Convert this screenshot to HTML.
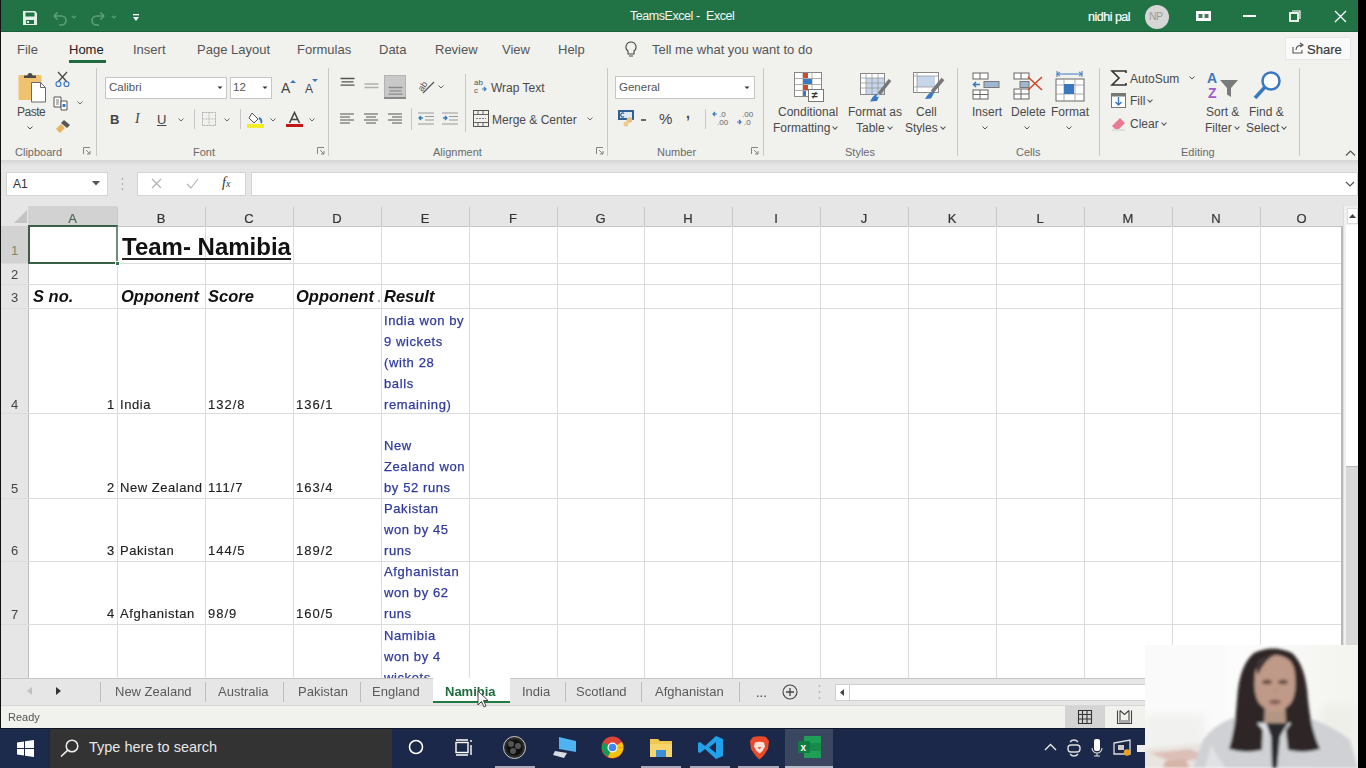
<!DOCTYPE html>
<html><head><meta charset="utf-8">
<style>
*{margin:0;padding:0;box-sizing:border-box}
html,body{width:1366px;height:768px;overflow:hidden;background:#000;font-family:"Liberation Sans",sans-serif}
.a{position:absolute}
.t{position:absolute;white-space:nowrap;line-height:1}
svg{position:absolute;overflow:visible}
#title{left:1px;top:0;width:1357px;height:32px;background:#217346}
#tabs{left:1px;top:32px;width:1357px;height:34px;background:#f1f1ee}
#ribbon{left:1px;top:66px;width:1357px;height:94px;background:#f1f1ee}
#shadow{left:1px;top:160px;width:1357px;height:10px;background:linear-gradient(#d6d6d6,#e6e6e6 60%)}
#fbar{left:1px;top:170px;width:1357px;height:36px;background:#e6e6e6}
#colhdr{left:1px;top:206px;width:1357px;height:20px;background:#e6e6e6}
#grid{left:1px;top:226px;width:1342px;height:452px;background:#fff}
#sheettabs{left:1px;top:678px;width:1357px;height:28px;background:#e6e6e6}
#status{left:1px;top:706px;width:1357px;height:22px;background:#f1f1ee}
#taskbar{left:0;top:728px;width:1358px;height:40px;background:#1c2849}
.tab{font-size:13px;color:#555;top:43px}
.lbl{font-size:11px;color:#6a6a6a;top:147px}
.rt{font-size:12px;color:#4a4a4a}
.sep{position:absolute;width:1px;background:#c8c8c8}
.ch{display:inline-block;width:4px;height:4px;border-right:1.2px solid #555;border-bottom:1.2px solid #555;transform:rotate(45deg);margin-left:3px;position:relative;top:-3px}
#wrap{position:absolute;left:0;top:0;width:1366px;height:768px;filter:blur(0.35px)}
</style></head><body><div id="wrap">
<div class="a" style="left:0;top:0;width:1px;height:728px;background:#111"></div>
<div id="title" class="a"></div>
<div id="tabs" class="a"></div>
<div id="ribbon" class="a"></div>
<div id="shadow" class="a"></div>
<div id="fbar" class="a"></div>
<div id="colhdr" class="a"></div>
<div id="grid" class="a"></div>
<div id="sheettabs" class="a"></div>
<div id="status" class="a"></div>
<div id="taskbar" class="a"></div>

<!-- TITLEBAR -->
<svg style="left:22px;top:10px" width="16" height="16" viewBox="0 0 16 16"><path d="M1 1h12l2 2v12H1z" fill="#e4efe8"/><rect x="3.5" y="2.5" width="9" height="4" fill="#217346"/><rect x="4" y="10" width="8" height="4" fill="#217346"/><rect x="5" y="11" width="2" height="2" fill="#e4efe8"/></svg>
<svg style="left:51px;top:10px" width="30" height="16" viewBox="0 0 30 16"><path d="M3 6h7.5a4.5 4.5 0 0 1 0 9H8M3 6l3.5-3.5M3 6l3.5 3.5" fill="none" stroke="#5f9e7a" stroke-width="1.6"/><path d="M21 6l2 2 2-2" fill="none" stroke="#5f9e7a" stroke-width="1.1"/></svg>
<svg style="left:89px;top:10px" width="30" height="16" viewBox="0 0 30 16"><path d="M15 6H7.5a4.5 4.5 0 0 0 0 9H10M15 6l-3.5-3.5M15 6l-3.5 3.5" fill="none" stroke="#5f9e7a" stroke-width="1.6"/><path d="M23 6l2 2 2-2" fill="none" stroke="#5f9e7a" stroke-width="1.1"/></svg>
<svg style="left:132px;top:13px" width="8" height="10" viewBox="0 0 8 10"><rect x="1" y="1" width="6" height="1.3" fill="#fff"/><path d="M1 4h6L4 8z" fill="#fff"/></svg>
<div class="t" style="left:630px;top:10px;font-size:12.5px;color:#f4f8f5;letter-spacing:-0.45px">TeamsExcel</div><div class="t" style="left:696px;top:10px;font-size:12.5px;color:#f4f8f5">-</div><div class="t" style="left:706px;top:10px;font-size:12.5px;color:#f4f8f5;letter-spacing:-0.45px">Excel</div><div class="a" style="left:1px;top:31px;width:1357px;height:1px;background:#1b5e38"></div>
<div class="t" style="left:1088px;top:11px;font-size:12.5px;color:#fff;letter-spacing:-0.5px;-webkit-text-stroke:0.2px #fff">nidhi pal</div>
<div class="a" style="left:1145px;top:5px;width:24px;height:24px;border-radius:50%;background:#d6d6d6"></div>
<div class="t" style="left:1149px;top:11px;font-size:10.5px;color:#9a9a9a;letter-spacing:-0.5px">NP</div>
<svg style="left:1196px;top:11px" width="15" height="10" viewBox="0 0 15 10"><rect x="0" y="0" width="15" height="10" fill="#fff"/><rect x="2.5" y="3" width="4" height="4" fill="#4a7a5c"/><rect x="8.5" y="3" width="4" height="4" fill="#4a7a5c"/></svg>
<div class="a" style="left:1243px;top:15px;width:13px;height:1.5px;background:#fff"></div>
<svg style="left:1289px;top:10px" width="12" height="12" viewBox="0 0 12 12"><rect x="1" y="3" width="8" height="8" fill="none" stroke="#fff" stroke-width="1.8"/><path d="M3 1h8v8" fill="none" stroke="#fff" stroke-width="1.2"/></svg>
<svg style="left:1334px;top:10px" width="13" height="13" viewBox="0 0 13 13"><path d="M1 1l11 11M12 1L1 12" stroke="#fff" stroke-width="1.3"/></svg>

<!-- TABS -->
<div class="t tab" style="left:17px">File</div>
<div class="t tab" style="left:69px;color:#222">Home</div>
<div class="a" style="left:69px;top:60px;width:37px;height:3px;background:#1e6b3e"></div>
<div class="t tab" style="left:133px">Insert</div>
<div class="t tab" style="left:197px">Page Layout</div>
<div class="t tab" style="left:297px">Formulas</div>
<div class="t tab" style="left:379px">Data</div>
<div class="t tab" style="left:435px">Review</div>
<div class="t tab" style="left:502px">View</div>
<div class="t tab" style="left:558px">Help</div>
<svg style="left:625px;top:41px" width="12" height="16" viewBox="0 0 12 16"><path d="M6 1a5 5 0 0 0-3 9v3h6v-3a5 5 0 0 0-3-9z" fill="none" stroke="#444" stroke-width="1.1"/><path d="M4 15h4" stroke="#444"/></svg>
<div class="t tab" style="left:652px">Tell me what you want to do</div>
<div class="a" style="left:1285px;top:37px;width:66px;height:23px;background:#fafafa;border:1px solid #e6e6e6"></div>
<svg style="left:1292px;top:42px" width="12" height="12" viewBox="0 0 12 12"><path d="M1 5v6h9V8M4 8c0-4 3-5 7-5M8 1l3 2-3 2" fill="none" stroke="#555" stroke-width="1.1"/></svg>
<div class="t" style="left:1307px;top:43px;font-size:13px;color:#3a3a3a;-webkit-text-stroke:0.2px #3a3a3a">Share</div>

<!-- RIBBON: Clipboard -->
<svg style="left:17px;top:71px" width="30" height="32" viewBox="0 0 30 32"><rect x="1.5" y="4" width="23" height="25" rx="1" fill="#f0c26e"/><path d="M7 7h12V4.5h-3.5a2.5 2.5 0 0 0-5 0H7z" fill="#4a4a4a"/><path d="M14.5 11.5h9l5 5v14.5h-14z" fill="#fff" stroke="#6a6a6a" stroke-width="1"/><path d="M23.5 11.5v5h5" fill="none" stroke="#6a6a6a" stroke-width="1"/></svg>
<div class="t rt" style="left:17px;top:106px;letter-spacing:-0.5px">Paste</div>
<svg style="left:27px;top:126px" width="6" height="4" viewBox="0 0 6 4"><path d="M0.5 0.5l2.5 2.5 2.5-2.5" fill="none" stroke="#555" stroke-width="1"/></svg>
<svg style="left:55px;top:71px" width="15" height="16" viewBox="0 0 15 16"><path d="M3 1l9 10M12 1L3 11" stroke="#444" stroke-width="1.2"/><circle cx="3.5" cy="13" r="2.5" fill="none" stroke="#3a78c0" stroke-width="1.2"/><circle cx="11.5" cy="13" r="2.5" fill="none" stroke="#3a78c0" stroke-width="1.2"/></svg>
<svg style="left:53px;top:96px" width="17" height="15" viewBox="0 0 17 15"><path d="M1 1h7v10H1z" fill="#fff" stroke="#555"/><path d="M3 4h3M3 6h3M3 8h3" stroke="#555" stroke-width="0.8"/><path d="M8 5h6v9H8z" fill="#fff" stroke="#555"/><rect x="9.5" y="8" width="3" height="3" fill="#3a78c0"/></svg>
<svg style="left:77px;top:101px" width="6" height="4" viewBox="0 0 6 4"><path d="M0.5 0.5l2.5 2.5 2.5-2.5" fill="none" stroke="#666" stroke-width="1"/></svg>
<svg style="left:55px;top:119px" width="16" height="15" viewBox="0 0 16 15"><path d="M9 1l6 5-3 3-6-5z" fill="#555"/><path d="M6 5l4 4-5 5-4-4z" fill="#e8b563"/></svg>
<div class="t lbl" style="left:15px">Clipboard</div>
<svg style="left:83px;top:147px" width="8" height="8" viewBox="0 0 8 8"><path d="M0.5 7V0.5H7M3 3l4 4M7 4v3H4" fill="none" stroke="#777" stroke-width="0.9"/></svg>
<div class="sep" style="left:96px;top:68px;height:88px"></div>

<!-- Font -->
<div class="a" style="left:105px;top:77px;width:122px;height:22px;background:#fff;border:1px solid #c6c6c6"></div>
<div class="t" style="left:109px;top:82px;font-size:11.5px;color:#555">Calibri</div>
<svg style="left:217px;top:86px" width="6" height="4" viewBox="0 0 6 4"><path d="M0.5 0.5h5L3 3z" fill="#333"/></svg>
<div class="a" style="left:230px;top:77px;width:42px;height:22px;background:#fff;border:1px solid #c6c6c6"></div>
<div class="t" style="left:233px;top:82px;font-size:11.5px;color:#555">12</div>
<svg style="left:262px;top:86px" width="6" height="4" viewBox="0 0 6 4"><path d="M0.5 0.5h5L3 3z" fill="#333"/></svg>
<div class="t" style="left:281px;top:81px;font-size:14px;color:#444">A</div>
<svg style="left:290px;top:79px" width="6" height="4" viewBox="0 0 6 4"><path d="M0 4l3-3 3 3z" fill="#3a78c0"/></svg>
<div class="t" style="left:305px;top:83px;font-size:12px;color:#444">A</div>
<svg style="left:312px;top:79px" width="6" height="4" viewBox="0 0 6 4"><path d="M0 0l3 3 3-3z" fill="#3a78c0"/></svg>
<div class="t" style="left:110px;top:113px;font-size:13px;font-weight:bold;color:#444">B</div>
<div class="t" style="left:135px;top:112px;font-size:14px;font-style:italic;color:#444;font-family:'Liberation Serif',serif">I</div>
<div class="t" style="left:157px;top:113px;font-size:13px;text-decoration:underline;color:#444">U</div>
<svg style="left:178px;top:118px" width="6" height="4" viewBox="0 0 6 4"><path d="M0.5 0.5l2.5 2.5 2.5-2.5" fill="none" stroke="#666" stroke-width="1"/></svg>
<div class="sep" style="left:194px;top:109px;height:20px"></div>
<svg style="left:202px;top:112px" width="14" height="14" viewBox="0 0 14 14"><rect x="0.5" y="0.5" width="13" height="13" fill="none" stroke="#aaa" stroke-dasharray="2 1"/><path d="M7 0.5v13M0.5 7h13" stroke="#bbb" stroke-dasharray="2 1"/></svg>
<svg style="left:224px;top:118px" width="6" height="4" viewBox="0 0 6 4"><path d="M0.5 0.5l2.5 2.5 2.5-2.5" fill="none" stroke="#666" stroke-width="1"/></svg>
<div class="sep" style="left:240px;top:109px;height:20px"></div>
<svg style="left:247px;top:110px" width="18" height="18" viewBox="0 0 18 18"><path d="M5 3l6 6-4 4-5-5z" fill="#fff" stroke="#555"/><path d="M12 8c2 1 3 3 2 5" fill="none" stroke="#3a78c0" stroke-width="2"/><rect x="0" y="14" width="17" height="4" fill="#f4ee2a"/></svg>
<svg style="left:270px;top:118px" width="6" height="4" viewBox="0 0 6 4"><path d="M0.5 0.5l2.5 2.5 2.5-2.5" fill="none" stroke="#666" stroke-width="1"/></svg>
<svg style="left:286px;top:111px" width="17" height="17" viewBox="0 0 17 17"><path d="M3.5 12L8.5 1.5l5 10.5M5.5 8.5h6" fill="none" stroke="#444" stroke-width="1.6"/><rect x="0" y="13" width="17" height="3" fill="#c01818"/></svg>
<svg style="left:309px;top:118px" width="6" height="4" viewBox="0 0 6 4"><path d="M0.5 0.5l2.5 2.5 2.5-2.5" fill="none" stroke="#666" stroke-width="1"/></svg>
<div class="t lbl" style="left:193px">Font</div>
<svg style="left:317px;top:147px" width="8" height="8" viewBox="0 0 8 8"><path d="M0.5 7V0.5H7M3 3l4 4M7 4v3H4" fill="none" stroke="#777" stroke-width="0.9"/></svg>
<div class="sep" style="left:328px;top:68px;height:88px"></div>

<!-- Alignment -->
<svg style="left:340px;top:77px" width="15" height="10" viewBox="0 0 15 10"><path d="M0.5 1.5h14M1.5 4.8h12M0.5 8.1h14" stroke="#555" stroke-width="1.3"/></svg>
<svg style="left:364px;top:83px" width="15" height="7" viewBox="0 0 15 7"><path d="M0.5 1h14M0.5 4.5h14" stroke="#b0b0b0" stroke-width="1.3"/></svg>
<div class="a" style="left:384px;top:75px;width:22px;height:24px;background:#c9c9c9;border:1px solid #b4b4b4"></div>
<svg style="left:388px;top:86px" width="15" height="10" viewBox="0 0 15 10"><path d="M0.5 1.5h14M1.5 4.8h12M0.5 8.1h14" stroke="#8a8a8a" stroke-width="1.3"/></svg><div class="a" style="left:384px;top:97px;width:22px;height:2px;background:#8a8a8a"></div>
<svg style="left:418px;top:78px" width="17" height="16" viewBox="0 0 17 16"><text x="0" y="10" font-size="9" fill="#555" transform="rotate(-55 6 8)" font-family="Liberation Sans">ab</text><path d="M5 15l11-11" stroke="#555" stroke-width="1.2"/></svg>
<svg style="left:438px;top:85px" width="6" height="4" viewBox="0 0 6 4"><path d="M0.5 0.5l2.5 2.5 2.5-2.5" fill="none" stroke="#666" stroke-width="1"/></svg>
<div class="sep" style="left:465px;top:74px;height:58px"></div>
<svg style="left:474px;top:78px" width="14" height="16" viewBox="0 0 14 16"><text x="0" y="7" font-size="8" fill="#555" font-family="Liberation Sans">ab</text><text x="0" y="15" font-size="8" fill="#555" font-family="Liberation Sans">c</text><path d="M8 11h4M10 9l2 2-2 2" fill="none" stroke="#3a78c0" stroke-width="1.1"/></svg>
<div class="t rt" style="left:491px;top:82px">Wrap Text</div>
<svg style="left:340px;top:113px" width="14" height="12" viewBox="0 0 14 12"><path d="M0 1h14M0 4h10M0 7h14M0 10h10" stroke="#555" stroke-width="1.1"/></svg>
<svg style="left:364px;top:113px" width="14" height="12" viewBox="0 0 14 12"><path d="M0 1h14M2 4h10M0 7h14M2 10h10" stroke="#555" stroke-width="1.1"/></svg>
<svg style="left:388px;top:113px" width="14" height="12" viewBox="0 0 14 12"><path d="M0 1h14M4 4h10M0 7h14M4 10h10" stroke="#555" stroke-width="1.1"/></svg>
<div class="sep" style="left:411px;top:108px;height:22px"></div>
<svg style="left:418px;top:112px" width="16" height="13" viewBox="0 0 16 13"><path d="M0 1h16M7 4.5h9M7 8h9M0 12h16" stroke="#999" stroke-width="1.1"/><path d="M5 6H1M3 4L1 6l2 2" fill="none" stroke="#3a78c0" stroke-width="1.3"/></svg>
<svg style="left:442px;top:112px" width="16" height="13" viewBox="0 0 16 13"><path d="M0 1h16M7 4.5h9M7 8h9M0 12h16" stroke="#999" stroke-width="1.1"/><path d="M1 6h4M3 4l2 2-2 2" fill="none" stroke="#3a78c0" stroke-width="1.3"/></svg>
<svg style="left:473px;top:110px" width="16" height="17" viewBox="0 0 16 17"><rect x="0.5" y="0.5" width="15" height="16" fill="none" stroke="#555"/><path d="M0.5 4.5h15M0.5 12.5h15M5 0.5v4M10 0.5v4M5 12.5v4M10 12.5v4" stroke="#555" stroke-width="0.9"/><path d="M3 8.5h10" stroke="#777" stroke-dasharray="2 1"/></svg>
<div class="t rt" style="left:492px;top:114px">Merge &amp; Center</div>
<svg style="left:587px;top:117px" width="6" height="4" viewBox="0 0 6 4"><path d="M0.5 0.5l2.5 2.5 2.5-2.5" fill="none" stroke="#666" stroke-width="1"/></svg>
<div class="t lbl" style="left:433px">Alignment</div>
<svg style="left:596px;top:147px" width="8" height="8" viewBox="0 0 8 8"><path d="M0.5 7V0.5H7M3 3l4 4M7 4v3H4" fill="none" stroke="#777" stroke-width="0.9"/></svg>
<div class="sep" style="left:607px;top:68px;height:88px"></div>

<!-- Number -->
<div class="a" style="left:615px;top:76px;width:140px;height:23px;background:#fff;border:1px solid #c6c6c6"></div>
<div class="t" style="left:619px;top:82px;font-size:11.5px;color:#555">General</div>
<svg style="left:744px;top:86px" width="6" height="4" viewBox="0 0 6 4"><path d="M0.5 0.5h5L3 3z" fill="#333"/></svg>
<svg style="left:618px;top:110px" width="17" height="17" viewBox="0 0 17 17"><rect x="0" y="0" width="16" height="10" fill="#2f5f94"/><rect x="2" y="2" width="12" height="6" fill="#dfe8f3"/><path d="M6 3.5a2 2 0 1 0 0 3" fill="none" stroke="#2f5f94" stroke-width="1.2"/><circle cx="11.5" cy="10" r="2.8" fill="#e8c080"/><circle cx="8" cy="14" r="2.5" fill="#f0c888"/></svg>
<div class="a" style="left:641px;top:119px;width:5px;height:1.5px;background:#666"></div>
<div class="t" style="left:659px;top:111px;font-size:15px;color:#444">%</div>
<div class="t" style="left:686px;top:106px;font-size:14px;color:#444;font-weight:bold">,</div>
<div class="sep" style="left:705px;top:109px;height:20px"></div>
<svg style="left:712px;top:110px" width="17" height="16" viewBox="0 0 17 16"><path d="M5 4H1M3 2L1 4l2 2" fill="none" stroke="#3a78c0" stroke-width="1.2"/><text x="7" y="7" font-size="8" fill="#666" font-family="Liberation Sans">.0</text><text x="5" y="15" font-size="8" fill="#666" font-family="Liberation Sans">.00</text></svg>
<svg style="left:736px;top:110px" width="17" height="16" viewBox="0 0 17 16"><text x="6" y="7" font-size="8" fill="#666" font-family="Liberation Sans">.00</text><path d="M1 12h4M3 10l2 2-2 2" fill="none" stroke="#3a78c0" stroke-width="1.2"/><text x="8" y="15" font-size="8" fill="#666" font-family="Liberation Sans">.0</text></svg>
<div class="t lbl" style="left:657px">Number</div>
<svg style="left:751px;top:147px" width="8" height="8" viewBox="0 0 8 8"><path d="M0.5 7V0.5H7M3 3l4 4M7 4v3H4" fill="none" stroke="#777" stroke-width="0.9"/></svg>
<div class="sep" style="left:763px;top:68px;height:88px"></div>

<!-- Styles -->
<svg style="left:794px;top:72px" width="31" height="31" viewBox="0 0 31 31"><rect x="0.5" y="0.5" width="27" height="24" fill="#fff" stroke="#888"/><path d="M0.5 6.5h27M0.5 12.5h27M0.5 18.5h27M9 0.5v24M18 0.5v24" stroke="#999" stroke-width="0.8"/><rect x="9" y="1" width="5" height="5" fill="#d24726"/><rect x="9" y="7" width="9" height="5" fill="#3a78c0"/><rect x="9" y="13" width="5" height="5" fill="#d24726"/><rect x="9" y="19" width="3" height="5" fill="#3a78c0"/><rect x="14.5" y="17.5" width="15" height="12" fill="#fff" stroke="#777"/><text x="17.5" y="27" font-size="11" font-weight="bold" fill="#333" font-family="Liberation Sans">≠</text></svg>
<div class="t rt" style="left:778px;top:106px">Conditional</div>
<div class="t rt" style="left:773px;top:122px">Formatting<span class="ch"></span></div>
<svg style="left:860px;top:73px" width="32" height="30" viewBox="0 0 32 30"><rect x="0.5" y="0.5" width="24" height="21" fill="#fff" stroke="#888"/><rect x="6" y="5" width="18" height="16" fill="#c5d5ea"/><path d="M0.5 5h24M0.5 10h24M0.5 15h24M6 0.5v21M12 0.5v21M18 0.5v21" stroke="#999" stroke-width="0.8"/><path d="M30 7L19 21" stroke="#777" stroke-width="3.5"/><path d="M10 28.5c3-6 6-9 10-7l-3 6.5z" fill="#3a78c0"/><path d="M16 23l3-2 1 1.5-2 2z" fill="#dfe9f5"/></svg>
<div class="t rt" style="left:848px;top:106px">Format as</div>
<div class="t rt" style="left:856px;top:122px">Table<span class="ch"></span></div>
<svg style="left:913px;top:72px" width="30" height="28" viewBox="0 0 30 28"><rect x="0.5" y="0.5" width="25" height="20" fill="#fff" stroke="#888"/><rect x="4" y="4" width="18" height="11" fill="#c5d5ea"/><path d="M0.5 4h25M0.5 15h25M4 0.5v20" stroke="#999" stroke-width="0.8"/><path d="M30 7L19 20" stroke="#777" stroke-width="3.5"/><path d="M12 27c3-5 6-8 9-6l-3 5.5z" fill="#3a78c0"/></svg>
<div class="t rt" style="left:916px;top:106px">Cell</div>
<div class="t rt" style="left:905px;top:122px">Styles<span class="ch"></span></div>
<div class="t lbl" style="left:845px">Styles</div>
<div class="sep" style="left:957px;top:68px;height:88px"></div>

<!-- Cells -->
<svg style="left:972px;top:72px" width="28" height="28" viewBox="0 0 28 28"><rect x="1" y="1" width="15" height="6" fill="#fff" stroke="#666"/><path d="M8 1v6" stroke="#666"/><rect x="12" y="9.5" width="15" height="6" fill="#9fb5d0" stroke="#777"/><path d="M1 12.5h7M4 10l-2.5 2.5L4 15" fill="none" stroke="#3a78c0" stroke-width="1.6"/><rect x="1" y="18" width="15" height="9" fill="#fff" stroke="#666"/><path d="M8 18v9M1 22.5h15" stroke="#666"/></svg>
<div class="t rt" style="left:972px;top:106px">Insert</div>
<svg style="left:982px;top:126px" width="6" height="4" viewBox="0 0 6 4"><path d="M0.5 0.5l2.5 2.5 2.5-2.5" fill="none" stroke="#555" stroke-width="1"/></svg>
<svg style="left:1013px;top:72px" width="31" height="28" viewBox="0 0 31 28"><rect x="1" y="1" width="15" height="6" fill="#fff" stroke="#666"/><path d="M8 1v6" stroke="#666"/><rect x="7" y="9.5" width="9" height="6" fill="#9fb5d0" stroke="#777"/><rect x="1" y="17" width="15" height="10" fill="#fff" stroke="#666"/><path d="M8 17v10M1 22h15" stroke="#666"/><path d="M15 5l14 13M29 5L15 18" stroke="#d24726" stroke-width="1.6"/></svg>
<div class="t rt" style="left:1011px;top:106px">Delete</div>
<svg style="left:1024px;top:126px" width="6" height="4" viewBox="0 0 6 4"><path d="M0.5 0.5l2.5 2.5 2.5-2.5" fill="none" stroke="#555" stroke-width="1"/></svg>
<svg style="left:1055px;top:70px" width="30" height="33" viewBox="0 0 30 33"><path d="M2 4h25M2 1v6M27 1v6M5 2L2 4l3 2M24 2l3 2-3 2" fill="none" stroke="#3a78c0" stroke-width="1"/><rect x="1" y="9" width="28" height="22" fill="#fff" stroke="#666"/><path d="M1 15h28M1 24h28M9 9v22M20 9v22" stroke="#999" stroke-width="0.8"/><rect x="9" y="14" width="10" height="10" fill="#3a78c0"/></svg>
<div class="t rt" style="left:1051px;top:106px">Format</div>
<svg style="left:1066px;top:126px" width="6" height="4" viewBox="0 0 6 4"><path d="M0.5 0.5l2.5 2.5 2.5-2.5" fill="none" stroke="#555" stroke-width="1"/></svg>
<div class="t lbl" style="left:1016px">Cells</div>
<div class="sep" style="left:1099px;top:68px;height:88px"></div>

<!-- Editing -->
<svg style="left:1111px;top:70px" width="16" height="16" viewBox="0 0 16 16"><path d="M15 3V1H1l7 7-7 7h14v-2" fill="none" stroke="#333" stroke-width="1.6"/></svg>
<div class="t rt" style="left:1130px;top:73px">AutoSum</div>
<svg style="left:1189px;top:76px" width="6" height="4" viewBox="0 0 6 4"><path d="M0.5 0.5l2.5 2.5 2.5-2.5" fill="none" stroke="#555" stroke-width="1"/></svg>
<svg style="left:1111px;top:93px" width="15" height="15" viewBox="0 0 15 15"><rect x="0.5" y="0.5" width="14" height="14" fill="#fff" stroke="#777"/><rect x="0.5" y="0.5" width="14" height="3" fill="#777"/><path d="M7.5 4v8M4.5 9l3 3 3-3" fill="none" stroke="#3a78c0" stroke-width="1.4"/></svg>
<div class="t rt" style="left:1130px;top:95px">Fill<span class="ch"></span></div>
<svg style="left:1111px;top:117px" width="15" height="14" viewBox="0 0 15 14"><path d="M9 1l5 5-6 6H4L1 9z" fill="#e87a94"/><path d="M1 13h13" stroke="#ccc"/></svg>
<div class="t rt" style="left:1130px;top:118px">Clear<span class="ch"></span></div>
<svg style="left:1207px;top:71px" width="32" height="28" viewBox="0 0 32 28"><text x="0" y="12" font-size="14" font-weight="bold" fill="#3a78c0" font-family="Liberation Sans">A</text><text x="1" y="27" font-size="14" font-weight="bold" fill="#a05cc8" font-family="Liberation Sans">Z</text><path d="M13 9h18l-7 8v9l-4-2.5V17z" fill="#7a7a7a"/></svg>
<div class="t rt" style="left:1206px;top:106px">Sort &amp;</div>
<div class="t rt" style="left:1205px;top:122px">Filter<span class="ch"></span></div>
<svg style="left:1253px;top:71px" width="29" height="29" viewBox="0 0 29 29"><circle cx="18" cy="10" r="8.5" fill="#fff" stroke="#3a78c0" stroke-width="2.5"/><path d="M12 16L2 27" stroke="#3a78c0" stroke-width="3.5"/></svg>
<div class="t rt" style="left:1249px;top:106px">Find &amp;</div>
<div class="t rt" style="left:1246px;top:122px">Select<span class="ch"></span></div>
<div class="t lbl" style="left:1181px">Editing</div>
<div class="sep" style="left:1299px;top:68px;height:88px"></div>
<svg style="left:1345px;top:150px" width="11" height="6" viewBox="0 0 11 6"><path d="M1 5.5l4.5-4.5 4.5 4.5" fill="none" stroke="#555" stroke-width="1.2"/></svg>

<!-- GRID -->
<div class="a" style="left:6px;top:172px;width:102px;height:24px;background:#fff;border:1px solid #d4d4d4"></div>
<div class="t" style="left:13px;top:178px;font-size:12px;color:#333">A1</div>
<svg style="left:92px;top:181px" width="8" height="5" viewBox="0 0 8 5"><path d="M0 0h8L4 4.5z" fill="#555"/></svg>
<svg style="left:121px;top:177px" width="3" height="14" viewBox="0 0 3 14"><circle cx="1.5" cy="2" r="0.8" fill="#999"/><circle cx="1.5" cy="7" r="0.8" fill="#999"/><circle cx="1.5" cy="12" r="0.8" fill="#999"/></svg>
<div class="a" style="left:137px;top:172px;width:109px;height:24px;background:#fff;border:1px solid #d4d4d4"></div>
<svg style="left:151px;top:178px" width="11" height="11" viewBox="0 0 11 11"><path d="M1 1l9 9M10 1L1 10" stroke="#b0b0b0" stroke-width="1.1"/></svg>
<svg style="left:186px;top:178px" width="13" height="11" viewBox="0 0 13 11"><path d="M1 6l4 4 7-9" fill="none" stroke="#b0b0b0" stroke-width="1.1"/></svg>
<div class="t" style="left:222px;top:176px;font-size:14px;font-style:italic;color:#333;font-family:'Liberation Serif',serif">f<span style="font-size:10px">x</span></div>
<div class="a" style="left:251px;top:172px;width:1107px;height:24px;background:#fff;border:1px solid #d4d4d4"></div>
<svg style="left:1345px;top:181px" width="10" height="6" viewBox="0 0 10 6"><path d="M1 1l4 4 4-4" fill="none" stroke="#555" stroke-width="1.2"/></svg>
<svg style="left:14px;top:210px" width="13" height="13" viewBox="0 0 13 13"><path d="M13 0v13H0z" fill="#c4c4c4"/></svg>
<div class="a" style="left:28px;top:206px;width:89px;height:20px;background:#d2d2d2"></div>
<div class="a" style="left:117px;top:207px;width:1px;height:19px;background:#c8c8c8"></div>
<div class="t" style="left:28px;width:89px;text-align:center;top:212px;font-size:13px;color:#4a6a55;-webkit-text-stroke:0.2px #4a6a55">A</div>
<div class="a" style="left:205px;top:207px;width:1px;height:19px;background:#c8c8c8"></div>
<div class="t" style="left:117px;width:88px;text-align:center;top:212px;font-size:13px;color:#333;-webkit-text-stroke:0.2px #333">B</div>
<div class="a" style="left:293px;top:207px;width:1px;height:19px;background:#c8c8c8"></div>
<div class="t" style="left:205px;width:88px;text-align:center;top:212px;font-size:13px;color:#333;-webkit-text-stroke:0.2px #333">C</div>
<div class="a" style="left:381px;top:207px;width:1px;height:19px;background:#c8c8c8"></div>
<div class="t" style="left:293px;width:88px;text-align:center;top:212px;font-size:13px;color:#333;-webkit-text-stroke:0.2px #333">D</div>
<div class="a" style="left:469px;top:207px;width:1px;height:19px;background:#c8c8c8"></div>
<div class="t" style="left:381px;width:88px;text-align:center;top:212px;font-size:13px;color:#333;-webkit-text-stroke:0.2px #333">E</div>
<div class="a" style="left:557px;top:207px;width:1px;height:19px;background:#c8c8c8"></div>
<div class="t" style="left:469px;width:88px;text-align:center;top:212px;font-size:13px;color:#333;-webkit-text-stroke:0.2px #333">F</div>
<div class="a" style="left:644px;top:207px;width:1px;height:19px;background:#c8c8c8"></div>
<div class="t" style="left:557px;width:87px;text-align:center;top:212px;font-size:13px;color:#333;-webkit-text-stroke:0.2px #333">G</div>
<div class="a" style="left:732px;top:207px;width:1px;height:19px;background:#c8c8c8"></div>
<div class="t" style="left:644px;width:88px;text-align:center;top:212px;font-size:13px;color:#333;-webkit-text-stroke:0.2px #333">H</div>
<div class="a" style="left:820px;top:207px;width:1px;height:19px;background:#c8c8c8"></div>
<div class="t" style="left:732px;width:88px;text-align:center;top:212px;font-size:13px;color:#333;-webkit-text-stroke:0.2px #333">I</div>
<div class="a" style="left:908px;top:207px;width:1px;height:19px;background:#c8c8c8"></div>
<div class="t" style="left:820px;width:88px;text-align:center;top:212px;font-size:13px;color:#333;-webkit-text-stroke:0.2px #333">J</div>
<div class="a" style="left:996px;top:207px;width:1px;height:19px;background:#c8c8c8"></div>
<div class="t" style="left:908px;width:88px;text-align:center;top:212px;font-size:13px;color:#333;-webkit-text-stroke:0.2px #333">K</div>
<div class="a" style="left:1084px;top:207px;width:1px;height:19px;background:#c8c8c8"></div>
<div class="t" style="left:996px;width:88px;text-align:center;top:212px;font-size:13px;color:#333;-webkit-text-stroke:0.2px #333">L</div>
<div class="a" style="left:1172px;top:207px;width:1px;height:19px;background:#c8c8c8"></div>
<div class="t" style="left:1084px;width:88px;text-align:center;top:212px;font-size:13px;color:#333;-webkit-text-stroke:0.2px #333">M</div>
<div class="a" style="left:1260px;top:207px;width:1px;height:19px;background:#c8c8c8"></div>
<div class="t" style="left:1172px;width:88px;text-align:center;top:212px;font-size:13px;color:#333;-webkit-text-stroke:0.2px #333">N</div>
<div class="a" style="left:1343px;top:207px;width:1px;height:19px;background:#c8c8c8"></div>
<div class="t" style="left:1260px;width:83px;text-align:center;top:212px;font-size:13px;color:#333;-webkit-text-stroke:0.2px #333">O</div>
<div class="a" style="left:1px;top:226px;width:1342px;height:1px;background:#c4c4c4"></div>
<div class="a" style="left:1px;top:226px;width:27px;height:452px;background:#e6e6e6"></div>
<div class="a" style="left:1px;top:226px;width:27px;height:37px;background:#d2d2d2"></div>
<div class="a" style="left:28px;top:226px;width:1px;height:452px;background:#bdbdbd"></div>
<div class="a" style="left:117px;top:226px;width:1px;height:452px;background:#dcdcdc"></div>
<div class="a" style="left:205px;top:226px;width:1px;height:452px;background:#dcdcdc"></div>
<div class="a" style="left:293px;top:226px;width:1px;height:452px;background:#dcdcdc"></div>
<div class="a" style="left:381px;top:226px;width:1px;height:452px;background:#dcdcdc"></div>
<div class="a" style="left:469px;top:226px;width:1px;height:452px;background:#dcdcdc"></div>
<div class="a" style="left:557px;top:226px;width:1px;height:452px;background:#dcdcdc"></div>
<div class="a" style="left:644px;top:226px;width:1px;height:452px;background:#dcdcdc"></div>
<div class="a" style="left:732px;top:226px;width:1px;height:452px;background:#dcdcdc"></div>
<div class="a" style="left:820px;top:226px;width:1px;height:452px;background:#dcdcdc"></div>
<div class="a" style="left:908px;top:226px;width:1px;height:452px;background:#dcdcdc"></div>
<div class="a" style="left:996px;top:226px;width:1px;height:452px;background:#dcdcdc"></div>
<div class="a" style="left:1084px;top:226px;width:1px;height:452px;background:#dcdcdc"></div>
<div class="a" style="left:1172px;top:226px;width:1px;height:452px;background:#dcdcdc"></div>
<div class="a" style="left:1260px;top:226px;width:1px;height:452px;background:#dcdcdc"></div>
<div class="a" style="left:1343px;top:226px;width:1px;height:452px;background:#dcdcdc"></div>
<div class="a" style="left:1px;top:263px;width:1342px;height:1px;background:#dcdcdc"></div>
<div class="a" style="left:1px;top:284px;width:1342px;height:1px;background:#dcdcdc"></div>
<div class="a" style="left:1px;top:308px;width:1342px;height:1px;background:#dcdcdc"></div>
<div class="a" style="left:1px;top:413px;width:1342px;height:1px;background:#dcdcdc"></div>
<div class="a" style="left:1px;top:498px;width:1342px;height:1px;background:#dcdcdc"></div>
<div class="a" style="left:1px;top:561px;width:1342px;height:1px;background:#dcdcdc"></div>
<div class="a" style="left:1px;top:624px;width:1342px;height:1px;background:#dcdcdc"></div>
<div class="t" style="left:1px;width:27px;text-align:center;top:244px;font-size:13px;color:#7d8a62">1</div>
<div class="t" style="left:1px;width:27px;text-align:center;top:268px;font-size:13px;color:#444">2</div>
<div class="t" style="left:1px;width:27px;text-align:center;top:291px;font-size:13px;color:#444">3</div>
<div class="t" style="left:1px;width:27px;text-align:center;top:397.5px;font-size:13px;color:#444">4</div>
<div class="t" style="left:1px;width:27px;text-align:center;top:481.5px;font-size:13px;color:#444">5</div>
<div class="t" style="left:1px;width:27px;text-align:center;top:544px;font-size:13px;color:#444">6</div>
<div class="t" style="left:1px;width:27px;text-align:center;top:607.5px;font-size:13px;color:#444">7</div>
<div class="a" style="left:1343px;top:206px;width:15px;height:472px;background:#f0f0f0;border-left:1px solid #ddd"></div>
<div class="a" style="left:1347px;top:208px;width:11px;height:16px;background:#fff;border:1px solid #ddd"></div>
<svg style="left:1349px;top:214px" width="7" height="4" viewBox="0 0 7 4"><path d="M0 4l3.5-4 3.5 4z" fill="#444"/></svg>
<div class="a" style="left:1346px;top:225px;width:12px;height:241px;background:#fff"></div><div class="a" style="left:1346px;top:466px;width:12px;height:180px;background:#d8d8d8;border-top:1px solid #b8b8b8"></div>
<div class="a" style="left:1341px;top:226px;width:2px;height:452px;background:#b8b8b8"></div>
<!-- CELLS -->
<div class="a" style="left:0;top:0;width:1343px;height:678px;overflow:hidden"><div class="a" style="left:28px;top:225px;width:90px;height:39px;border:2px solid #3c5e46;border-right-color:#6f8f76"></div>
<div class="a" style="left:115px;top:261px;width:5px;height:5px;background:#2f7a4c;border:1px solid #fff"></div>
<div class="t" style="left:122px;top:234.7px;font-size:24px;height:24px;color:#111;font-weight:bold;">Team- Namibia</div>
<div class="a" style="left:122px;top:258px;width:169px;height:1.5px;background:#222"></div>
<div class="t" style="left:33px;top:288.0px;font-size:16.5px;height:16.5px;color:#111;font-weight:bold;font-style:italic;">S no.</div>
<div class="t" style="left:121px;top:288.0px;font-size:16.5px;height:16.5px;color:#111;font-weight:bold;font-style:italic;">Opponent</div>
<div class="t" style="left:208px;top:288.0px;font-size:16.5px;height:16.5px;color:#111;font-weight:bold;font-style:italic;">Score</div>
<div class="t" style="left:296px;top:288.0px;font-size:16.5px;height:16.5px;color:#111;font-weight:bold;font-style:italic;">Opponent</div>
<div class="t" style="left:384px;top:288.0px;font-size:16.5px;height:16.5px;color:#111;font-weight:bold;font-style:italic;">Result</div>
<div class="a" style="left:378px;top:300px;width:2px;height:2px;background:#aaa"></div>
<div class="t" style="left:107px;top:398.0px;font-size:13px;height:13px;color:#1e1e1e;-webkit-text-stroke:0.15px #222;">1</div>
<div class="t" style="left:120px;top:398.0px;font-size:13px;height:13px;color:#1e1e1e;letter-spacing:0.55px;-webkit-text-stroke:0.15px #222;">India</div>
<div class="t" style="left:208px;top:398.0px;font-size:13px;height:13px;color:#1e1e1e;letter-spacing:1px;-webkit-text-stroke:0.15px #222;">132/8</div>
<div class="t" style="left:296px;top:398.0px;font-size:13px;height:13px;color:#1e1e1e;letter-spacing:1px;-webkit-text-stroke:0.15px #222;">136/1</div>
<div class="t" style="left:107px;top:481.0px;font-size:13px;height:13px;color:#1e1e1e;-webkit-text-stroke:0.15px #222;">2</div>
<div class="t" style="left:120px;top:481.0px;font-size:13px;height:13px;color:#1e1e1e;letter-spacing:0.55px;-webkit-text-stroke:0.15px #222;">New Zealand</div>
<div class="t" style="left:208px;top:481.0px;font-size:13px;height:13px;color:#1e1e1e;letter-spacing:1px;-webkit-text-stroke:0.15px #222;">111/7</div>
<div class="t" style="left:296px;top:481.0px;font-size:13px;height:13px;color:#1e1e1e;letter-spacing:1px;-webkit-text-stroke:0.15px #222;">163/4</div>
<div class="t" style="left:107px;top:544.0px;font-size:13px;height:13px;color:#1e1e1e;-webkit-text-stroke:0.15px #222;">3</div>
<div class="t" style="left:120px;top:544.0px;font-size:13px;height:13px;color:#1e1e1e;letter-spacing:0.55px;-webkit-text-stroke:0.15px #222;">Pakistan</div>
<div class="t" style="left:208px;top:544.0px;font-size:13px;height:13px;color:#1e1e1e;letter-spacing:1px;-webkit-text-stroke:0.15px #222;">144/5</div>
<div class="t" style="left:296px;top:544.0px;font-size:13px;height:13px;color:#1e1e1e;letter-spacing:1px;-webkit-text-stroke:0.15px #222;">189/2</div>
<div class="t" style="left:107px;top:607.0px;font-size:13px;height:13px;color:#1e1e1e;-webkit-text-stroke:0.15px #222;">4</div>
<div class="t" style="left:120px;top:607.0px;font-size:13px;height:13px;color:#1e1e1e;letter-spacing:0.55px;-webkit-text-stroke:0.15px #222;">Afghanistan</div>
<div class="t" style="left:208px;top:607.0px;font-size:13px;height:13px;color:#1e1e1e;letter-spacing:1px;-webkit-text-stroke:0.15px #222;">98/9</div>
<div class="t" style="left:296px;top:607.0px;font-size:13px;height:13px;color:#1e1e1e;letter-spacing:1px;-webkit-text-stroke:0.15px #222;">160/5</div>
<div class="t" style="left:384px;top:314.0px;font-size:13px;height:13px;color:#2f3a9e;letter-spacing:0.6px;-webkit-text-stroke:0.25px #2f3a9e;">India won by</div>
<div class="t" style="left:384px;top:335.0px;font-size:13px;height:13px;color:#2f3a9e;letter-spacing:0.6px;-webkit-text-stroke:0.25px #2f3a9e;">9 wickets</div>
<div class="t" style="left:384px;top:356.0px;font-size:13px;height:13px;color:#2f3a9e;letter-spacing:0.6px;-webkit-text-stroke:0.25px #2f3a9e;">(with 28</div>
<div class="t" style="left:384px;top:377.0px;font-size:13px;height:13px;color:#2f3a9e;letter-spacing:0.6px;-webkit-text-stroke:0.25px #2f3a9e;">balls</div>
<div class="t" style="left:384px;top:398.0px;font-size:13px;height:13px;color:#2f3a9e;letter-spacing:0.6px;-webkit-text-stroke:0.25px #2f3a9e;">remaining)</div>
<div class="t" style="left:384px;top:439.0px;font-size:13px;height:13px;color:#2f3a9e;letter-spacing:0.6px;-webkit-text-stroke:0.25px #2f3a9e;">New</div>
<div class="t" style="left:384px;top:460.0px;font-size:13px;height:13px;color:#2f3a9e;letter-spacing:0.6px;-webkit-text-stroke:0.25px #2f3a9e;">Zealand won</div>
<div class="t" style="left:384px;top:481.0px;font-size:13px;height:13px;color:#2f3a9e;letter-spacing:0.6px;-webkit-text-stroke:0.25px #2f3a9e;">by 52 runs</div>
<div class="t" style="left:384px;top:502.0px;font-size:13px;height:13px;color:#2f3a9e;letter-spacing:0.6px;-webkit-text-stroke:0.25px #2f3a9e;">Pakistan</div>
<div class="t" style="left:384px;top:523.0px;font-size:13px;height:13px;color:#2f3a9e;letter-spacing:0.6px;-webkit-text-stroke:0.25px #2f3a9e;">won by 45</div>
<div class="t" style="left:384px;top:544.0px;font-size:13px;height:13px;color:#2f3a9e;letter-spacing:0.6px;-webkit-text-stroke:0.25px #2f3a9e;">runs</div>
<div class="t" style="left:384px;top:565.0px;font-size:13px;height:13px;color:#2f3a9e;letter-spacing:0.6px;-webkit-text-stroke:0.25px #2f3a9e;">Afghanistan</div>
<div class="t" style="left:384px;top:586.0px;font-size:13px;height:13px;color:#2f3a9e;letter-spacing:0.6px;-webkit-text-stroke:0.25px #2f3a9e;">won by 62</div>
<div class="t" style="left:384px;top:607.0px;font-size:13px;height:13px;color:#2f3a9e;letter-spacing:0.6px;-webkit-text-stroke:0.25px #2f3a9e;">runs</div>
<div class="t" style="left:384px;top:629.0px;font-size:13px;height:13px;color:#2f3a9e;letter-spacing:0.6px;-webkit-text-stroke:0.25px #2f3a9e;">Namibia</div>
<div class="t" style="left:384px;top:650.0px;font-size:13px;height:13px;color:#2f3a9e;letter-spacing:0.6px;-webkit-text-stroke:0.25px #2f3a9e;">won by 4</div>
<div class="t" style="left:384px;top:671.0px;font-size:13px;height:13px;color:#2f3a9e;letter-spacing:0.6px;-webkit-text-stroke:0.25px #2f3a9e;">wickets</div></div>
<!-- SHEET TABS -->
<div class="a" style="left:1px;top:678px;width:1145px;height:1px;background:#c6c6c6"></div>
<svg style="left:27px;top:687px" width="5" height="8" viewBox="0 0 5 8"><path d="M5 0v8L0 4z" fill="#c0c0c0"/></svg>
<svg style="left:56px;top:687px" width="5" height="8" viewBox="0 0 5 8"><path d="M0 0v8l5-4z" fill="#333"/></svg>
<div class="sep" style="left:100px;top:682px;height:20px;background:#bdbdbd"></div>
<div class="t" style="left:115px;top:685px;font-size:13px;color:#5a5a5a">New Zealand</div>
<div class="sep" style="left:205px;top:682px;height:20px;background:#bdbdbd"></div>
<div class="t" style="left:218px;top:685px;font-size:13px;color:#5a5a5a">Australia</div>
<div class="sep" style="left:283px;top:682px;height:20px;background:#bdbdbd"></div>
<div class="t" style="left:298px;top:685px;font-size:13px;color:#5a5a5a">Pakistan</div>
<div class="sep" style="left:360px;top:682px;height:20px;background:#bdbdbd"></div>
<div class="t" style="left:372px;top:685px;font-size:13px;color:#5a5a5a">England</div>
<div class="a" style="left:433px;top:678px;width:77px;height:25px;background:#fff"></div>
<div class="a" style="left:433px;top:701px;width:77px;height:2px;background:#1e7a40"></div>
<div class="t" style="left:445px;top:685px;font-size:13px;font-weight:bold;color:#1e6b3e">Namibia</div>
<div class="t" style="left:522px;top:685px;font-size:13px;color:#5a5a5a">India</div>
<div class="sep" style="left:565px;top:682px;height:20px;background:#bdbdbd"></div>
<div class="t" style="left:576px;top:685px;font-size:13px;color:#5a5a5a">Scotland</div>
<div class="sep" style="left:641px;top:682px;height:20px;background:#bdbdbd"></div>
<div class="t" style="left:655px;top:685px;font-size:13px;color:#5a5a5a">Afghanistan</div>
<div class="sep" style="left:739px;top:682px;height:20px;background:#bdbdbd"></div>
<div class="t" style="left:756px;top:686px;font-size:13px;color:#444">...</div>
<svg style="left:782px;top:684px" width="16" height="16" viewBox="0 0 16 16"><circle cx="8" cy="8" r="7" fill="none" stroke="#444" stroke-width="1.1"/><path d="M8 4v8M4 8h8" stroke="#444" stroke-width="1.3"/></svg>
<svg style="left:818px;top:684px" width="3" height="16" viewBox="0 0 3 16"><circle cx="1.5" cy="2" r="0.8" fill="#999"/><circle cx="1.5" cy="8" r="0.8" fill="#999"/><circle cx="1.5" cy="14" r="0.8" fill="#999"/></svg>
<div class="a" style="left:835px;top:684px;width:330px;height:17px;background:#fff;border:1px solid #cfcfcf"></div>
<div class="a" style="left:849px;top:685px;width:1px;height:15px;background:#cfcfcf"></div>
<svg style="left:840px;top:689px" width="4" height="7" viewBox="0 0 4 7"><path d="M4 0v7L0 3.5z" fill="#444"/></svg>
<!-- STATUS -->
<div class="a" style="left:1px;top:705px;width:1145px;height:1px;background:#d6d6d6"></div>
<div class="t" style="left:8px;top:712px;font-size:11px;color:#555">Ready</div>
<div class="a" style="left:1065px;top:706px;width:40px;height:22px;background:#d4d4d4"></div>
<svg style="left:1078px;top:710px" width="14" height="14" viewBox="0 0 14 14"><path d="M0.5 0.5h13v13H0.5zM0.5 4.5h13M0.5 9h13M4.5 0.5v13M9 0.5v13" fill="none" stroke="#333" stroke-width="1.1"/></svg>
<svg style="left:1117px;top:710px" width="15" height="14" viewBox="0 0 15 14"><path d="M0.5 0.5v13h14V0.5M3 0.5l4.5 4 4.5-4M3 0.5v12M12 0.5v12" fill="none" stroke="#444" stroke-width="1.1"/><rect x="3" y="10" width="9" height="3" fill="#aaa"/></svg>
<!-- TASKBAR -->
<div class="a" style="left:0;top:728px;width:1358px;height:1px;background:#0e1526"></div>
<div class="a" style="left:0;top:729px;width:48px;height:39px;background:#1c2a4c"></div>
<svg style="left:17px;top:740px" width="17" height="17" viewBox="0 0 17 17"><path d="M0 2.5l7-1v6.5H0zM8 1.3l9-1.3v8H8zM0 9h7v6.5l-7-1zM8 9h9v8l-9-1.3z" fill="#fff"/></svg>
<div class="a" style="left:50px;top:729px;width:342px;height:39px;background:#333"></div>
<svg style="left:60px;top:739px" width="19" height="18" viewBox="0 0 19 18"><circle cx="12" cy="7" r="5.8" fill="none" stroke="#eee" stroke-width="1.5"/><path d="M7.8 11.2L1 17.5" stroke="#eee" stroke-width="1.6"/></svg>
<div class="t" style="left:89px;top:740px;font-size:14.5px;color:#e6e6e6">Type here to search</div>
<svg style="left:408px;top:739px" width="16" height="16" viewBox="0 0 16 16"><circle cx="8" cy="8" r="6.5" fill="none" stroke="#fff" stroke-width="1.6"/></svg>
<svg style="left:455px;top:739px" width="20" height="17" viewBox="0 0 20 17"><rect x="1" y="3.5" width="12" height="10" fill="none" stroke="#fff" stroke-width="1.4"/><path d="M1 1h12M1 16h12M16 1v2M16 6v10" stroke="#fff" stroke-width="1.4"/></svg>
<svg style="left:503px;top:736px" width="23" height="23" viewBox="0 0 23 23"><circle cx="11.5" cy="11.5" r="11" fill="#2a2a2a" stroke="#ccc" stroke-width="1"/><circle cx="11.5" cy="11.5" r="8" fill="#111"/><circle cx="8" cy="8" r="3" fill="#555"/><circle cx="15" cy="10" r="3" fill="#555"/><circle cx="10" cy="15" r="3" fill="#555"/></svg>
<div class="a" style="left:495px;top:766px;width:40px;height:2px;background:#aab"></div>
<svg style="left:553px;top:737px" width="24" height="21" viewBox="0 0 24 21"><path d="M6 0l17 4v11L6 12z" fill="#4fb3f0"/><path d="M2 14l12 2-3 5L0 18z" fill="#d8dde4"/></svg>
<svg style="left:601px;top:736px" width="23" height="23" viewBox="0 0 23 23"><circle cx="11.5" cy="11.5" r="11" fill="#db4437"/><path d="M11.5 11.5L2 6.5A11 11 0 0 0 7 21z" fill="#0f9d58"/><path d="M11.5 11.5L7 21A11 11 0 0 0 22.5 11.5z" fill="#f4c20d"/><path d="M11.5 11.5H22.5A11 11 0 0 0 21 6z" fill="#f4c20d"/><circle cx="11.5" cy="11.5" r="5" fill="#fff"/><circle cx="11.5" cy="11.5" r="3.8" fill="#4285f4"/></svg>
<svg style="left:650px;top:738px" width="22" height="19" viewBox="0 0 22 19"><path d="M0 1h8l2 2h12v16H0z" fill="#f0c750"/><rect x="0" y="6" width="22" height="13" fill="#f6d56c"/><rect x="6" y="12" width="10" height="7" fill="#3a8fd6"/></svg>
<div class="a" style="left:641px;top:766px;width:40px;height:2px;background:#aab"></div>
<svg style="left:698px;top:736px" width="25" height="23" viewBox="0 0 25 23"><path d="M18 0l7 3v17l-7 3-11-10-5 4-2-1V7l2-1 5 4zM18 6l-7 5.5 7 5.5z" fill="#23a0ea"/></svg>
<div class="a" style="left:690px;top:766px;width:40px;height:2px;background:#aab"></div>
<svg style="left:749px;top:736px" width="21" height="24" viewBox="0 0 21 24"><path d="M4 1 Q10.5 -0.5 17 1 L20 5 L19 13 Q15 20 10.5 23.5 Q6 20 2 13 L1 5z" fill="#ea4a2a"/><path d="M6 6.5 Q10.5 5 15 6.5 L16 10.5 L13.5 15 L10.5 17.5 L7.5 15 L5 10.5z" fill="#fbe2d8"/><path d="M8.5 11h4l-2 2.5z" fill="#e06040"/></svg>
<div class="a" style="left:738px;top:766px;width:41px;height:2px;background:#aab"></div>
<div class="a" style="left:785px;top:729px;width:48px;height:39px;background:#3b4761"></div>
<svg style="left:798px;top:736px" width="23" height="22" viewBox="0 0 23 22"><rect x="6" y="0" width="17" height="22" rx="1" fill="#1e9e57"/><rect x="6" y="7" width="17" height="8" fill="#168a48"/><rect x="0" y="5" width="12" height="12" rx="1" fill="#107c41"/><text x="2.5" y="14.5" font-size="10" font-weight="bold" fill="#fff" font-family="Liberation Sans">x</text></svg>
<div class="a" style="left:785px;top:766px;width:48px;height:2px;background:#b4bccc"></div>
<svg style="left:1044px;top:743px" width="13" height="8" viewBox="0 0 13 8"><path d="M1 7l5.5-5.5L12 7" fill="none" stroke="#eee" stroke-width="1.3"/></svg>
<svg style="left:1067px;top:739px" width="14" height="18" viewBox="0 0 14 18"><rect x="1" y="6" width="12" height="7" rx="3" fill="none" stroke="#ddd" stroke-width="1.4"/><path d="M3 3a5 5 0 0 1 8 0M3 15a5 5 0 0 0 8 0" fill="none" stroke="#ddd" stroke-width="1.3"/></svg>
<svg style="left:1091px;top:739px" width="12" height="18" viewBox="0 0 12 18"><rect x="3" y="0" width="6" height="12" rx="2" fill="#fff"/><path d="M1 9a5 5 0 0 0 10 0M6 14v3M3 17h6" fill="none" stroke="#ddd" stroke-width="1.1"/></svg>
<svg style="left:1113px;top:739px" width="19" height="18" viewBox="0 0 19 18"><path d="M1 4l16-3v14L1 15z" fill="none" stroke="#ddd" stroke-width="1.3"/><rect x="5" y="6" width="6" height="5" fill="#ccc"/><circle cx="14" cy="13.5" r="3.2" fill="#f0a020"/></svg>
<div class="a" style="left:1137px;top:745px;width:8px;height:7px;background:#eee"></div>

<!-- WEBCAM -->
<div class="a" style="left:1145px;top:645px;width:213px;height:123px;overflow:hidden;background:#f2f2f0">
<svg style="left:0;top:0" width="213" height="123" viewBox="0 0 213 123">
<defs>
<filter id="bl" x="-20%" y="-20%" width="140%" height="140%"><feGaussianBlur stdDeviation="1.5"/></filter>
<filter id="bl2" x="-20%" y="-20%" width="140%" height="140%"><feGaussianBlur stdDeviation="5"/></filter>
<linearGradient id="bg" x1="0" y1="0" x2="1" y2="0"><stop offset="0" stop-color="#f8f8f8"/><stop offset="0.45" stop-color="#fcfcfc"/><stop offset="1" stop-color="#f3f3ef"/></linearGradient>
</defs>
<rect width="213" height="123" fill="url(#bg)"/><rect x="0" y="0" width="80" height="100" fill="#fafafa"/>
<g filter="url(#bl2)">
<rect x="0" y="70" width="60" height="40" fill="#f1f1ef"/>
<rect x="175" y="60" width="38" height="63" fill="#efefea"/>
</g>
<g filter="url(#bl)">
<path d="M-5 104 L60 98 L85 108 L70 123 L-5 123z" fill="#e9e4e0"/>
<path d="M5 108 L45 104 L65 112 L30 118z" fill="#dcc0b8"/>
<path d="M20 116 L40 114 L45 123 L18 123z" fill="#d6b4a8"/>
<!-- body hoodie -->
<path d="M48 123 L58 95 Q68 80 90 72 L112 68 L148 68 Q185 78 205 95 L213 123z" fill="#cfd1d4"/>
<path d="M60 123 L66 100 L80 123z" fill="#e0e1e3"/>
<!-- hair -->
<path d="M117 105 Q100 109 84 104 Q90 85 92 55 Q94 20 109 8 Q128 -1 147 8 Q161 20 163 55 Q166 85 175 104 Q160 109 143 105 L140 78 L118 78 Z" fill="#2e2828"/>
<!-- neck -->
<path d="M120 58 L140 58 L141 80 L119 80z" fill="#b39684"/>
<!-- face -->
<path d="M110 30 Q111 11 130 10 Q149 11 150 30 Q152 48 146 58 Q138 67 130 67 Q122 67 114 58 Q108 48 110 30z" fill="#c09a88"/>
<path d="M111 22 Q118 9 130 10 Q120 14 113 30z" fill="#3a3030"/>
<ellipse cx="122" cy="37" rx="5" ry="2.5" fill="#6e544a"/><ellipse cx="138" cy="37" rx="5" ry="2.5" fill="#6e544a"/><path d="M127 43 L130 51 L133 43z" fill="#b89484"/>
<ellipse cx="130" cy="57" rx="6" ry="2.5" fill="#85625a"/>
<!-- inner dark shirt -->
<path d="M121 78 L143 78 L135 92 L132 123 L127 123 L126 92z" fill="#2a2a2e"/>
<path d="M112 78 L126 94 L121 78z" fill="#dcdde0"/>
<path d="M146 78 L134 94 L143 78z" fill="#dcdde0"/>
</g>
</svg>
</div>
<!-- mouse cursor -->
<svg style="left:477px;top:690px" width="12" height="18" viewBox="0 0 12 18"><path d="M1 1v14l3.5-3.5 2.5 5.5 2-1-2.5-5.5H11z" fill="#fff" stroke="#333" stroke-width="0.9"/></svg>

</div></body></html>
